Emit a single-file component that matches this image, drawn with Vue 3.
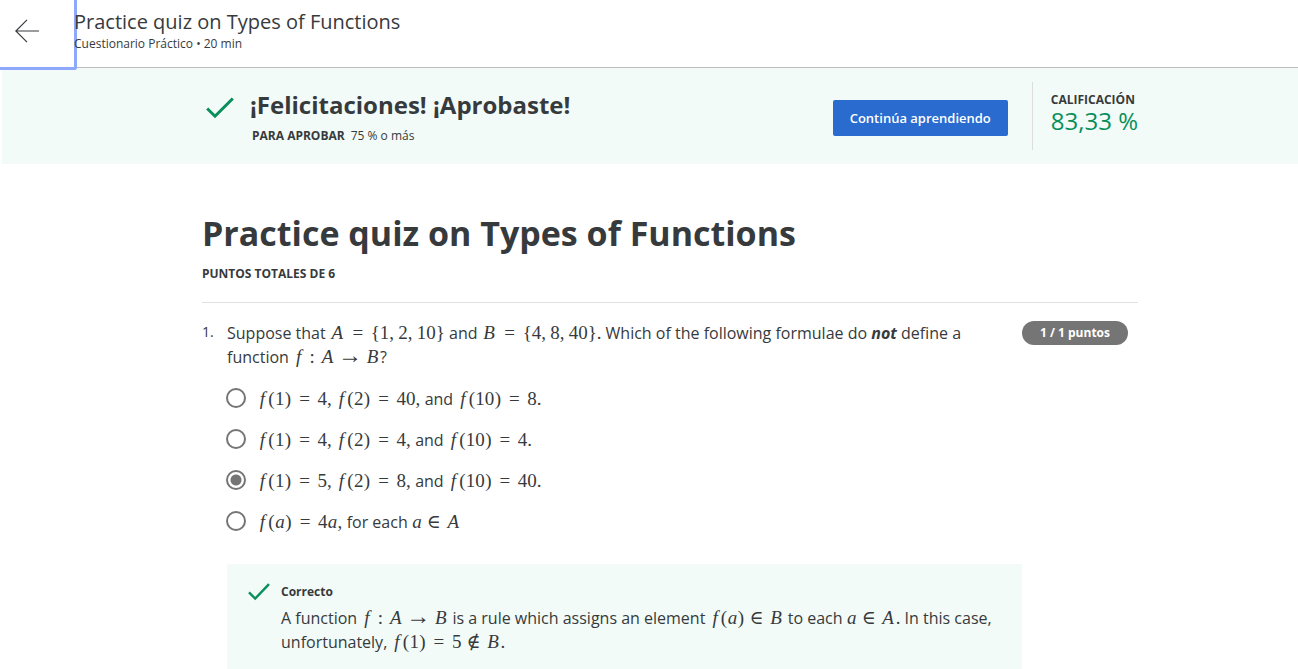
<script setup>
import { ref } from 'vue'

const kinds = { '=': 'rel', '→': 'arrow', '∈': 'member', '∉': 'member', ':': 'colon', ',': 'comma', f: 'fn', a: 'low', '{': 'brace', '}': 'brace', '(': 'paren', ')': 'paren' }

function kindOf(ch) {
  return kinds[ch] || (/[A-Z]/.test(ch) ? 'cap' : 'num')
}

// Text between dollar signs is a formula, text between asterisks is emphasised.
function parse(source) {
  return source.split(/(\$[^$]+\$|\*[^*]+\*)/).filter(Boolean).map((part) => {
    if (part[0] === '$') {
      return { type: 'math', atoms: [...part.slice(1, -1)].map((ch) => ({ ch, kind: kindOf(ch) })) }
    }
    if (part[0] === '*') return { type: 'em', text: part.slice(1, -1) }
    return { type: 'text', text: part }
  })
}

const question = parse('Suppose that $A={1,2,10}$ and $B={4,8,40}.$ Which of the following formulae do *not* define a function $f:A→B$?')
const options = [
  '$f(1)=4,f(2)=40,$ and $f(10)=8.$',
  '$f(1)=4,f(2)=4,$ and $f(10)=4.$',
  '$f(1)=5,f(2)=8,$ and $f(10)=40.$',
  '$f(a)=4a,$ for each $a∈A$'
].map(parse)
const feedback = parse('A function $f:A→B$ is a rule which assigns an element $f(a)∈B$ to each $a∈A.$ In this case, unfortunately, $f(1)=5∉B.$')
const selected = ref(2)
</script>

<template>
  <div class="page">
    <header class="topbar">
      <button class="back" type="button" aria-label="Volver">
        <svg width="24" height="24" viewBox="0 0 24 24" fill="none" stroke="#373a3c" stroke-width="1.2">
          <path d="M24 12H1M12 .8L.8 12 12 23.2" />
        </svg>
      </button>
      <div class="heading">
        <div class="name">Practice quiz on Types of Functions</div>
        <div class="meta">Cuestionario Práctico • 20 min</div>
      </div>
    </header>

    <section class="banner">
      <div class="column result">
        <svg class="tick" width="28" height="22" viewBox="0 0 28 22" fill="none" stroke="#088f5b" stroke-width="3">
          <path d="M1.2 11.5L9 19.2 26.8 1.5" />
        </svg>
        <div class="verdict">
          <h2>¡Felicitaciones! ¡Aprobaste!</h2>
          <p><strong>PARA APROBAR</strong><span>75 % o más</span></p>
        </div>
        <button class="continue" type="button">Continúa aprendiendo</button>
        <div class="grade">
          <strong>CALIFICACIÓN</strong>
          <span>83,33 %</span>
        </div>
      </div>
    </section>

    <main class="column">
      <h1>Practice quiz on Types of Functions</h1>
      <p class="total">PUNTOS TOTALES DE 6</p>

      <section class="question">
        <span class="number">1.</span>
        <div class="body">
          <p id="prompt" class="prompt"><template v-for="(p, i) in question" :key="i"><span v-if="p.type === 'math'" class="math"><span v-for="(a, j) in p.atoms" :key="j" :class="a.kind">{{ a.ch }}</span></span><em v-else-if="p.type === 'em'">{{ p.text }}</em><template v-else>{{ p.text }}</template></template></p>
          <div class="options" role="radiogroup" aria-labelledby="prompt">
            <label v-for="(option, n) in options" :key="n">
              <input v-model="selected" type="radio" name="answer" :value="n">
              <span class="choice"><template v-for="(p, i) in option" :key="i"><span v-if="p.type === 'math'" class="math"><span v-for="(a, j) in p.atoms" :key="j" :class="a.kind">{{ a.ch }}</span></span><template v-else>{{ p.text }}</template></template></span>
            </label>
          </div>
          <div class="feedback">
            <svg width="22" height="18" viewBox="0 0 22 18" fill="none" stroke="#088f5b" stroke-width="2.4">
              <path d="M1 9.3L7.2 15.6 21 1.2" />
            </svg>
            <div>
              <strong>Correcto</strong>
              <p><template v-for="(p, i) in feedback" :key="i"><span v-if="p.type === 'math'" class="math"><span v-for="(a, j) in p.atoms" :key="j" :class="a.kind">{{ a.ch }}</span></span><template v-else>{{ p.text }}</template></template></p>
            </div>
          </div>
        </div>
        <div class="score"><span>1 / 1 puntos</span></div>
      </section>
    </main>
  </div>
</template>

<style>
html,
body {
  margin: 0;
  height: 100%;
  overflow: hidden;
  background: #fff;
}
</style>

<style scoped>
.page {
  color: #373a3c;
  font: 16px/24px "Open Sans", sans-serif;
}
h1, h2, p { margin: 0; }
.topbar {
  position: relative;
  z-index: 1;
  display: flex;
  height: 67px;
  border-bottom: 1px solid #bdbdbd;
}
.back {
  flex: none;
  width: 77px;
  height: 70px;
  margin-right: -3px;
  padding: 0 0 6px 15px;
  border: solid #8ea8fb;
  border-width: 0 3px 3px 0;
  border-radius: 0 0 3px 0;
  background: none;
  text-align: left;
}
.back svg { display: block; }
.heading { padding-top: 8px; }
.name { font-size: 20px; line-height: 28px; }
.meta { font-size: 12px; line-height: 16px; }
.banner {
  margin-left: 2px;
  background: #f2fbf8;
}
.column {
  box-sizing: border-box;
  max-width: 936px;
  margin: 0 auto;
  position: relative;
  left: 21px;
}
.result {
  display: flex;
  align-items: center;
  height: 96px;
}
.tick { flex: none; align-self: flex-start; margin: 29px 16px 0 3px; }
.verdict { flex: 1; padding-top: 5px; }
.verdict h2 { font-size: 24px; line-height: 32px; }
.verdict p { padding: 3px 0 0 2px; font-size: 12px; }
.verdict p span { margin-left: 6px; }
.continue {
  height: 36px;
  margin: 4px 24px 0 0;
  padding: 0 17px;
  border: 0;
  border-radius: 2px;
  background: #2a6bcf;
  color: #fff;
  font: 600 13px/20px "Open Sans", sans-serif;
}
.grade {
  display: flex;
  flex-direction: column;
  box-sizing: border-box;
  height: 68px;
  padding: 9px 1px 0 18px;
  border-left: 1px solid #ddd;
}
.grade strong { font-size: 12px; line-height: 18px; }
.grade span { color: #088f5b; font-size: 24px; line-height: 24px; }
h1 { padding-top: 45px; font-size: 34px; line-height: 48px; }
.total {
  padding: 5px 0 16px;
  border-bottom: 1px solid #e1e1e1;
  font-size: 12px;
  line-height: 24px;
  font-weight: 700;
}
.question { display: flex; padding-top: 18px; }
.number { flex: none; width: 25px; font-size: 14px; line-height: 22px; }
.body { flex: 1; min-width: 0; }
.prompt em { font-weight: 700; }
.options { display: grid; gap: 17px; padding: 17px 0 31px; }
.options label { display: flex; align-items: center; height: 24px; }
.choice { padding-top: 2px; }
.options input {
  appearance: none;
  box-sizing: border-box;
  width: 20px;
  height: 20px;
  margin: 0 11px 0 -1px;
  border: 2px solid #757575;
  border-radius: 50%;
}
.options input:checked {
  background: radial-gradient(circle, #757575 5px, transparent 6px);
}
.feedback {
  display: flex;
  gap: 11px;
  padding: 19px 21px 15px;
  background: #f2fbf8;
}
.feedback svg { flex: none; }
.feedback strong { display: block; font-size: 12px; line-height: 18px; }
.feedback p { padding-top: 5px; }
.score { flex: none; width: 116px; }
.score span {
  display: block;
  margin-right: 10px;
  border-radius: 12px;
  background: #757575;
  color: #fff;
  font-size: 12px;
  font-weight: 700;
  line-height: 24px;
  text-align: center;
}
.math {
  font-family: "Liberation Serif", "DejaVu Serif", serif;
  font-size: 19px;
  line-height: 20px;
  white-space: nowrap;
}
.math span { display: inline-block; text-align: center; }
.math .cap, .math .fn, .math .low { font-style: italic; }
.math .cap { width: 15px; }
.math .fn { width: 11px; }
.math .low { width: 10px; }
.math .paren { width: 7px; }
.math .brace { width: 9px; }
.math .comma { width: 9px; text-align: left; }
.math .comma:last-child { width: 5px; }
.math .colon { width: 16px; }
.math .rel { width: 26px; }
.math .member { width: 24px; }
.math .arrow { width: 30px; font-size: 24px; }
</style>
